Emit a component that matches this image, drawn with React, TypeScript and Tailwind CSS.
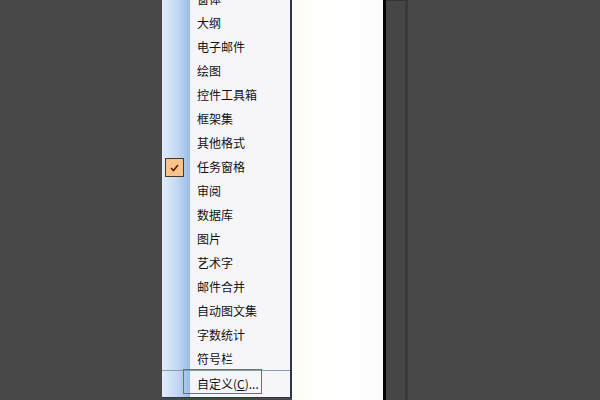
import React from "react";

const items = [
  "窗体",
  "大纲",
  "电子邮件",
  "绘图",
  "控件工具箱",
  "框架集",
  "其他格式",
  "任务窗格",
  "审阅",
  "数据库",
  "图片",
  "艺术字",
  "邮件合并",
  "自动图文集",
  "字数统计",
  "符号栏",
];

function Check() {
  return (
    <div className="w-[19px] h-[19px] border border-[#4a3826] bg-[#f9c38a] flex items-center justify-center">
      <svg width="9" height="8" viewBox="0 0 9 8">
        <path d="M1 4 L3.5 6.5 L8 1" fill="none" stroke="#5a1f14" strokeWidth="1.6" />
      </svg>
    </div>
  );
}

export default function App() {
  return (
    <div
      className="w-[600px] h-[400px] overflow-hidden flex bg-[#484848]"
      style={{ fontFamily: '"Noto Sans CJK SC", "Noto Sans", sans-serif' }}
    >
      <div className="w-[162px] shrink-0" />

      {/* Menu */}
      <div className="w-[130px] shrink-0 h-[398px] flex bg-[#f6f6fa] border-r-2 border-b border-[#2c3650] relative">
        <div className="w-[28px] shrink-0 bg-gradient-to-r from-[#e2edfb] via-[#c6daf4] to-[#9dbce6]" />
        <div className="flex-1 flex flex-col -mt-[13px]">
          {items.map((t) => (
            <div key={t} className="h-[24px] shrink-0 flex items-center pl-[7px] text-[12px] text-[#111111]">
              {t}
            </div>
          ))}
          <div className="h-px shrink-0 bg-[#8b9ab0] -ml-[28px] mt-[-1px]" />
          <div className="h-[26px] shrink-0 flex items-center pl-[7px] text-[12px] text-[#111111]">
            自定义(<span className="underline">C</span>)...
          </div>
        </div>
        {/* checked indicator */}
        <div className="absolute left-[3px] top-[158px]">
          <Check />
        </div>
        {/* annotation box */}
        <div className="absolute left-[21px] top-[369px] w-[79px] h-[25px] border border-[#c24a5e]" />
      </div>

      {/* page area */}
      <div className="w-[91px] shrink-0 bg-gradient-to-r from-[#fdfdf6] via-[#ffffff] to-[#fdfdff]" />
      <div className="w-[3px] shrink-0 bg-[#050505]" />
      <div className="w-[19px] shrink-0 bg-[#464646] border-t border-[#333333]" />
      <div className="w-[3px] shrink-0 bg-[#393939]" />
      <div className="flex-1 bg-[#484848]" />
    </div>
  );
}
